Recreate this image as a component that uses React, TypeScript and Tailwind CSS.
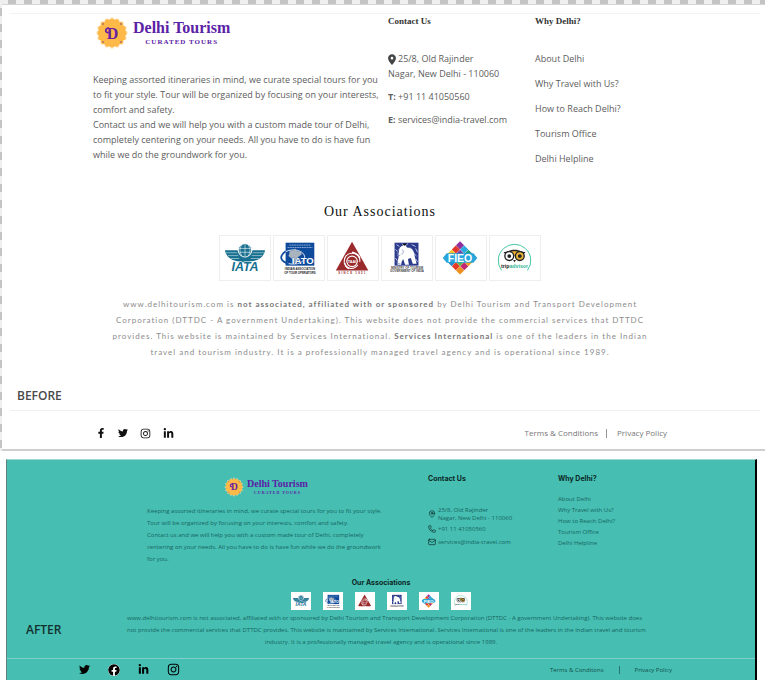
import React from "react";
import { FaFacebookF, FaTwitter, FaInstagram, FaLinkedinIn, FaFacebook } from "react-icons/fa";
import { FaLocationDot } from "react-icons/fa6";
import { MapPin, Phone, Mail } from "lucide-react";

function Badge({ className }: { className: string }) {
  const petals = Array.from({ length: 16 }, (_, i) => (i * Math.PI) / 8);
  return (
    <svg viewBox="0 0 34 34" className={className} aria-hidden="true">
      {petals.map((a) => (
        <circle key={"o" + a} cx={17 + 14 * Math.cos(a)} cy={17 + 14 * Math.sin(a)} r="2" fill="#ffdfa6" opacity="0.6" />
      ))}
      {petals.map((a) => (
        <circle key={a} cx={17 + 11.6 * Math.cos(a)} cy={17 + 11.6 * Math.sin(a)} r="3" fill="#ffb949" />
      ))}
      <circle cx="17" cy="17" r="13" fill="#ffb949" />
      {[[8, 8], [26, 8], [8, 26], [26, 26]].map(([x, y]) => (
        <circle key={`${x}-${y}`} cx={x} cy={y} r="0.8" fill="#70407a" />
      ))}
      <text x="17.5" y="22.5" textAnchor="middle" fontFamily="Liberation Serif, serif" fontWeight="700" fontSize="16" fill="#6722a0">D</text>
      <path d="M13 16.500c-2.500.5-3.500-3.500.2-4.500" fill="none" stroke="#6722a0" strokeWidth="1.800" strokeLinecap="round" />
    </svg>
  );
}

function Iata() {
  return (
    <g>
      <path d="M5 15h13l4 6h8l4-6h13c-1 5-4 9-11 11l-10 2-10-2C9 24 6 20 5 15z" fill="#17708f" />
      <path d="M6 17.500h12M8 20.500h11M11 23.500h9M46 17.500H34M44 20.500H33M41 23.500h-9" stroke="#fff" strokeWidth="0.5" />
      <circle cx="26" cy="15" r="7" fill="#17708f" stroke="#fff" />
      <path d="M20 13h12M20 17h12M26 9v12M23 9c-3 4-3 8 0 12M29 9c3 4 3 8 0 12" stroke="#fff" strokeWidth="0.6" fill="none" />
      <text x="26" y="36.500" textAnchor="middle" fontFamily="Liberation Sans, sans-serif" fontWeight="700" fontStyle="italic" fontSize="13" fill="#17708f" stroke="#fff" strokeWidth="1" paintOrder="stroke">IATA</text>
    </g>
  );
}

function Iato() {
  return (
    <g>
      <rect x="12" y="7" width="30" height="24" fill="#0e4a9b" />
      <path d="M16 9.500h22M14 12h26" stroke="#a9c2e4" strokeWidth="0.8" strokeDasharray="2 .5" />
      <ellipse cx="20" cy="22" rx="12" ry="7.500" fill="none" stroke="#fff" strokeWidth="0.900" />
      <path d="M12 16c-7 5-6 10 3 13" fill="none" stroke="#0e4a9b" strokeWidth="1.800" />
      <path d="M16 16l4-1 2-2 2 3 4 0 1 3-4 3-3 7-3-5-4-3 1-3z" fill="#aab4bf" />
      <text x="30" y="29" textAnchor="middle" fontFamily="Liberation Sans, sans-serif" fontWeight="700" fontSize="10" fill="#fff" stroke="#0e4a9b" strokeWidth="0.600" paintOrder="stroke">IATO</text>
      <text x="27" y="36" textAnchor="middle" fontFamily="Liberation Sans, sans-serif" fontWeight="700" fontSize="3" fill="#222">INDIAN ASSOCIATION</text>
      <text x="27" y="40" textAnchor="middle" fontFamily="Liberation Sans, sans-serif" fontWeight="700" fontSize="3" fill="#222">OF TOUR OPERATORS</text>
    </g>
  );
}

function Taai() {
  return (
    <g>
      <path d="M25 6L42 36H8z" fill="#9a2a2c" />
      <path d="M17 28c-1-6 3-10 8-10 5 0 9 4 8 9M18 31c3 4 10 4 13-1" fill="none" stroke="#fff" strokeWidth="1.100" />
      <path d="M25 17c5 1 7 3 8 6M17 28c1 3 2 5 5 6" stroke="#fff" strokeWidth="1.600" fill="none" />
      <circle cx="25" cy="26.500" r="5.500" fill="#9a2a2c" stroke="#fff" strokeWidth="1.200" />
      <text x="25" y="28" textAnchor="middle" fontFamily="Liberation Sans, sans-serif" fontWeight="700" fontSize="4" fill="#fff">TAAI</text>
      <text x="25.500" y="39.500" textAnchor="middle" fontFamily="Liberation Sans, sans-serif" fontWeight="700" fontSize="3" letterSpacing="1.3" fill="#9a2a2c">SINCE 1951</text>
    </g>
  );
}

function Ministry() {
  return (
    <g>
      <rect x="13" y="7" width="25" height="24" fill="#2b3a8c" />
      <path d="M15 9l3 2M21 8l2 3 4-3M31 9l4 2M35 13l2 4M33 18l3 3M14 14l2 2M29 12l3 3M35 24l2 3M14 23l2 3" stroke="#cdd3ee" strokeWidth="0.9" />
      <path d="M18 13c2-4 7-4 8-1 5 0 8 4 8 9l2 8h-4l-2-6-3 1 1 6h-4l-2-6c-1 2-2 3-2 6h-4c0-5 2-8 1-11z" fill="#fff" />
      <path d="M18 13c-3 3-2 6-2 8l3-1M21 14c2 2 1 5-1 5M15 27c1 2 2 2 4 2" stroke="#7f8abf" strokeWidth="0.8" fill="none" />
      <text x="26" y="35" textAnchor="middle" fontFamily="Liberation Sans, sans-serif" fontWeight="700" fontSize="3" fill="#444">MINISTRY OF TOURISM</text>
      <text x="26" y="38" textAnchor="middle" fontFamily="Liberation Sans, sans-serif" fontWeight="700" fontSize="3" fill="#444">GOVERNMENT OF INDIA</text>
    </g>
  );
}

function Fieo() {
  const colours = [
    "#8e2f9b", "#2aa9e0", "#1c9d8b", "#f28a1d",
    "#e0392b", "#7a3fa0", "#20b0a0", "#f0a020",
    "#f2c21b", "#e2452c", "#54b948", "#c3276e",
    "#37b34a", "#2b86c8", "#e53a24", "#ef8f1d",
  ];
  return (
    <g>
      <g transform="translate(25 5.500) rotate(45)">
        {colours.map((c, i) => (
          <rect key={i} x={(i % 4) * 6.2} y={Math.floor(i / 4) * 6.2} width="6" height="6" fill={c} />
        ))}
      </g>
      <path d="M7 23l4-5h28l4 5-4 5H11z" fill="#27a5dc" />
      <text x="25" y="27" textAnchor="middle" fontFamily="Liberation Sans, sans-serif" fontWeight="700" fontSize="11" fill="#fff">FIEO</text>
    </g>
  );
}

function Tripadvisor() {
  return (
    <g>
      <path d="M12 36a17 17 0 1 1 27 0" fill="none" stroke="#3cc3a0" strokeWidth="1" />
      <path d="M14 17l5-1c4-2 9-2 13 0l5 1-3 3H17z" fill="#222" />
      <path d="M20 17l5.500 4 5.500-4c-3-1.500-8-1.500-11 0z" fill="#e9b23a" />
      <circle cx="20" cy="21" r="4.600" fill="#fff" stroke="#222" strokeWidth="1.400" />
      <circle cx="31" cy="21" r="4.600" fill="#e9b23a" stroke="#222" strokeWidth="1.400" />
      <circle cx="20" cy="21" r="2" fill="#222" />
      <circle cx="31" cy="21" r="2" fill="#222" />
      <path d="M24 25h3l-1.500 2.500z" fill="#222" />
      <text x="25.500" y="33" textAnchor="middle" fontFamily="Liberation Sans, sans-serif" fontWeight="700" fontSize="5.500" fill="#222">
        trip<tspan fill="#2fb593">advisor</tspan>
      </text>
    </g>
  );
}

const partners = [
  { name: "IATA", Art: Iata },
  { name: "IATO", Art: Iato },
  { name: "TAAI", Art: Taai },
  { name: "Ministry of Tourism", Art: Ministry },
  { name: "FIEO", Art: Fieo },
  { name: "Tripadvisor", Art: Tripadvisor },
];

const links = ["About Delhi", "Why Travel with Us?", "How to Reach Delhi?", "Tourism Office", "Delhi Helpline"];

function BeforeFooter() {
  return (
    <section className="bg-[repeating-conic-gradient(#c4c4c4_0_25%,#efefef_0_50%)] bg-[length:16px_16px] pt-1 pl-[2px]">
      <div className="border-t border-b-2 border-t-[#d4d4d4] border-b-[#cfcfcf] bg-white pt-2 text-[#5c5c5c]">
        <div className="mr-[5px] ml-2 border-t border-[#f3f3f3]" />
        <div className="pr-[98px] pl-[91px]">
          <div className="grid grid-cols-[295px_147px_1fr]">
            <div>
              <a href="#home" className="mt-[2px] flex items-center gap-1 pl-[2px]">
                <Badge className="h-[34px] w-[34px]" />
                <span className="flex flex-col items-center font-['Liberation_Serif',serif] font-bold text-[#5b21a6]">
                  <span className="text-base leading-4">Delhi Tourism</span>
                  <span className="mt-[2px] text-[7px] leading-[8px] tracking-[1px]">CURATED TOURS</span>
                </span>
              </a>
              <p className="mt-[22px] text-[9px] leading-[15px] whitespace-nowrap">
                Keeping assorted itineraries in mind, we curate special tours for you<br />
                to fit your style. Tour will be organized by focusing on your interests,<br />
                comfort and safety.<br />
                Contact us and we will help you with a custom made tour of Delhi,<br />
                completely centering on your needs. All you have to do is have fun<br />
                while we do the groundwork for you.
              </p>
            </div>
            <div className="text-[9px] leading-[15px] whitespace-nowrap">
              <h2 className="font-['Liberation_Serif',serif] font-bold text-[#333]">Contact Us</h2>
              <address className="mt-[22px] not-italic">
                <FaLocationDot className="mr-[2px] inline h-[11px] w-[8px] align-middle text-[#444]" />
                25/8, Old Rajinder<br />
                Nagar, New Delhi - 110060
              </address>
              <p className="mt-2"><b>T:</b> +91 11 41050560</p>
              <p className="mt-2"><b>E:</b> services@india-travel.com</p>
            </div>
            <nav className="whitespace-nowrap">
              <h2 className="font-['Liberation_Serif',serif] text-[9px] leading-[15px] font-bold text-[#333]">Why Delhi?</h2>
              <ul className="mt-[17px] text-[9px] leading-[25px]">
                {links.map((l) => (
                  <li key={l}><a href="#why">{l}</a></li>
                ))}
              </ul>
            </nav>
          </div>
          <h2 className="mt-[31px] text-center font-['Liberation_Serif',serif] text-sm leading-5 tracking-[1px] text-[#111]">Our Associations</h2>
          <div className="mt-[13px] flex items-center justify-center gap-[2px]">
            {partners.map(({ name, Art }) => (
              <svg key={name} viewBox="0 0 52 46" role="img" aria-label={name} className="h-[46px] w-[52px] border border-[#eee]">
                <Art />
              </svg>
            ))}
          </div>
          <p className="mt-[15px] text-center font-[Lato,sans-serif] text-[8px] leading-4 tracking-[1px] whitespace-nowrap text-[#8c8c8c]">
            www.delhitourism.com is <b className="text-[#777]">not associated, affiliated with or sponsored</b> by Delhi Tourism and Transport Development<br />
            Corporation (DTTDC - A government Undertaking). This website does not provide the commercial services that DTTDC<br />
            provides. This website is maintained by Services International. <b className="text-[#777]">Services International</b> is one of the leaders in the Indian<br />
            travel and tourism industry. It is a professionally managed travel agency and is operational since 1989.
          </p>
        </div>
        <p className="mt-7 ml-[15px] text-xs leading-4 font-semibold text-[#4a4a4a]">BEFORE</p>
        <div className="mt-[6px] mr-[5px] ml-2 border-t border-[#f0f0f0]" />
        <div className="flex h-[38px] items-center justify-between pt-[6px] pr-[98px] pl-[94px]">
          <div className="flex items-center gap-3 text-[#111]">
            <a href="#facebook" aria-label="Facebook"><FaFacebookF className="size-[10px]" /></a>
            <a href="#twitter" aria-label="Twitter"><FaTwitter className="size-[10px]" /></a>
            <a href="#instagram" aria-label="Instagram"><FaInstagram className="size-[11px]" /></a>
            <a href="#linkedin" aria-label="LinkedIn"><FaLinkedinIn className="size-[11px]" /></a>
          </div>
          <div className="flex items-center text-[8px] leading-[10px] text-[#777]">
            <a href="#terms">Terms &amp; Conditions</a>
            <span className="mr-[10px] ml-2 h-[9px] border-l border-[#999]" />
            <a href="#privacy">Privacy Policy</a>
          </div>
        </div>
      </div>
    </section>
  );
}

function AfterFooter() {
  return (
    <section className="mt-2 mr-2 ml-[6px] border-t border-r-2 border-l border-t-[#9fd8d1] border-r-black border-l-[#66807d] bg-[#46beb2] text-[#17665f]">
      <div className="grid grid-cols-[281px_130px_1fr] pt-[14px] pl-[140px] whitespace-nowrap">
        <div>
          <a href="#home" className="mt-[3px] ml-[77px] flex items-center gap-[3px]">
            <Badge className="size-5" />
            <span className="flex flex-col items-center font-['Liberation_Serif',serif] font-bold text-[#5b21a6]">
              <span className="text-[10px] leading-[10px]">Delhi Tourism</span>
              <span className="mt-px text-[4px] leading-[5px] tracking-[1px]">CURATED TOURS</span>
            </span>
          </a>
          <p className="mt-2 text-[6px] leading-3">
            Keeping assorted itineraries in mind, we curate special tours for you to fit your style.<br />
            Tour will be organized by focusing on your interests, comfort and safety.<br />
            Contact us and we will help you with a custom made tour of Delhi, completely<br />
            centering on your needs. All you have to do is have fun while we do the groundwork<br />
            for you.
          </p>
        </div>
        <div className="text-[6px] leading-[8px]">
          <h2 className="font-[Inter,sans-serif] text-[7px] leading-[10px] font-bold text-[#0b2926]">Contact Us</h2>
          <address className="mt-[22px] flex items-center gap-[2px] not-italic">
            <MapPin className="size-2 text-[#0b2926]" />
            <span>25/8, Old Rajinder<br />Nagar, New Delhi - 110060</span>
          </address>
          <p className="mt-[3px] flex items-center gap-[2px]"><Phone className="size-2 text-[#0b2926]" />+91 11 41050560</p>
          <p className="mt-[5px] flex items-center gap-[2px]"><Mail className="size-2 text-[#0b2926]" />services@india-travel.com</p>
        </div>
        <nav>
          <h2 className="font-[Inter,sans-serif] text-[7px] leading-[10px] font-bold text-[#0b2926]">Why Delhi?</h2>
          <ul className="mt-[10px] text-[6px] leading-[11px]">
            {links.map((l) => (
              <li key={l}><a href="#why">{l}</a></li>
            ))}
          </ul>
        </nav>
      </div>
      <h2 className="mt-[13px] text-center font-[Inter,sans-serif] text-[7px] leading-[10px] font-bold text-[#0b2926]">Our Associations</h2>
      <div className="mt-1 flex items-end justify-center gap-3">
        {partners.map(({ name, Art }) => (
          <svg key={name} viewBox="0 0 52 46" role="img" aria-label={name} className="h-[18px] w-5 bg-white">
            <Art />
          </svg>
        ))}
      </div>
      <div className="grid grid-cols-[1fr_508px_1fr] items-center pt-[2px] pb-[10px]">
        <p className="ml-[19px] text-xs leading-4 font-semibold text-[#12302d]">AFTER</p>
        <p className="text-center text-[6px] leading-3 whitespace-nowrap">
          www.delhitourism.com is not associated, affiliated with or sponsored by Delhi Tourism and Transport Development Corporation (DTTDC - A government Undertaking). This website does<br />
          not provide the commercial services that DTTDC provides. This website is maintained by Services International. Services International is one of the leaders in the Indian travel and tourism<br />
          industry. It is a professionally managed travel agency and is operational since 1989.
        </p>
      </div>
      <div className="flex h-[22px] items-center justify-between border-t border-[#7ed0c8] pr-[83px] pl-[72px]">
        <div className="flex items-center gap-[18px] text-black">
          <a href="#twitter" aria-label="Twitter"><FaTwitter className="size-[11px]" /></a>
          <a href="#facebook" aria-label="Facebook"><FaFacebook className="size-3 rounded-full bg-white" /></a>
          <a href="#linkedin" aria-label="LinkedIn"><FaLinkedinIn className="size-[11px]" /></a>
          <a href="#instagram" aria-label="Instagram"><FaInstagram className="size-[13px]" /></a>
        </div>
        <div className="flex items-center text-[6px] leading-[8px] text-[#12504a]">
          <a href="#terms">Terms &amp; Conditons</a>
          <span className="mx-[15px] h-[8px] border-l border-[#26756e]" />
          <a href="#privacy">Privacy Policy</a>
        </div>
      </div>
    </section>
  );
}

export default function App() {
  return (
    <main className="bg-white font-['Open_Sans',sans-serif]">
      <BeforeFooter />
      <AfterFooter />
    </main>
  );
}
